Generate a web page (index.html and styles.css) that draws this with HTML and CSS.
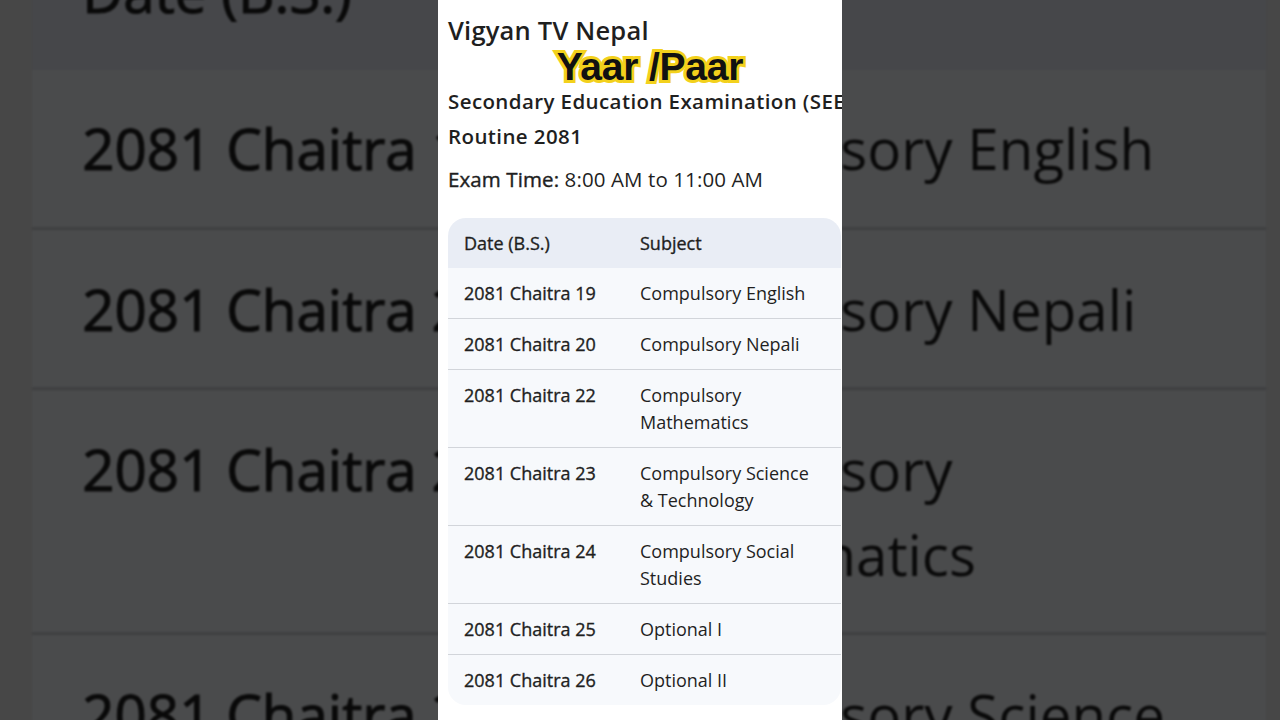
FILE: index.html
```html
<!DOCTYPE html>
<html lang="en">
<head>
<meta charset="utf-8">
<title>SEE Routine 2081</title>
<link rel="stylesheet" href="styles.css">
</head>
<body>
<div class="stage">
  <div class="backdrop" aria-hidden="true">
    <table class="routine routine-big">
      <thead><tr><th>Date (B.S.)</th><th>Subject</th></tr></thead>
      <tbody>
        <tr><td>2081 Chaitra 19</td><td>Compulsory English</td></tr>
        <tr><td>2081 Chaitra 20</td><td>Compulsory Nepali</td></tr>
        <tr><td>2081 Chaitra 22</td><td>Compulsory Mathematics</td></tr>
        <tr><td>2081 Chaitra 23</td><td>Compulsory Science &amp; Technology</td></tr>
        <tr><td>2081 Chaitra 24</td><td>Compulsory Social Studies</td></tr>
        <tr><td>2081 Chaitra 25</td><td>Optional I</td></tr>
        <tr><td>2081 Chaitra 26</td><td>Optional II</td></tr>
      </tbody>
    </table>
  </div>

  <main class="panel">
    <h1 class="channel">Vigyan TV Nepal</h1>
    <div class="brand">Yaar /Paar</div>
    <h2 class="heading"><span>Secondary Education Examination (SEE)</span><span>Routine 2081</span></h2>
    <p class="time"><strong>Exam Time:</strong> 8:00 AM to 11:00 AM</p>
    <table class="routine">
      <thead><tr><th>Date (B.S.)</th><th>Subject</th></tr></thead>
      <tbody>
        <tr><td>2081 Chaitra 19</td><td>Compulsory English</td></tr>
        <tr><td>2081 Chaitra 20</td><td>Compulsory Nepali</td></tr>
        <tr><td>2081 Chaitra 22</td><td>Compulsory Mathematics</td></tr>
        <tr><td>2081 Chaitra 23</td><td>Compulsory Science &amp; Technology</td></tr>
        <tr><td>2081 Chaitra 24</td><td>Compulsory Social Studies</td></tr>
        <tr><td>2081 Chaitra 25</td><td>Optional I</td></tr>
        <tr><td>2081 Chaitra 26</td><td>Optional II</td></tr>
      </tbody>
    </table>
  </main>
</div>
</body>
</html>
```

FILE: styles.css
```css
* { box-sizing: border-box; }

html, body {
  margin: 0;
  padding: 0;
}

body {
  width: 1280px;
  height: 720px;
  overflow: hidden;
  background: #474747;
  font-family: "Open Sans", "Noto Sans", "Liberation Sans", sans-serif;
  color: #1f1f1f;
}

.stage {
  position: relative;
  width: 1280px;
  height: 720px;
  overflow: hidden;
  display: flex;
  justify-content: center;
}

/* enlarged, dimmed copy of the table behind the phone frame */
.backdrop {
  position: absolute;
  inset: 0;
  overflow: hidden;
  background: #474747;
}

.routine-big {
  position: absolute;
  left: 32px;
  top: -111px;
  width: 404px;
  transform: scale(3.14);
  transform-origin: 0 0;
  filter: brightness(0.3) blur(0.4px);
}

.routine-big thead th:first-child,
.routine-big tbody tr:last-child td:first-child { border-radius: 0; }
.routine-big thead th:last-child,
.routine-big tbody tr:last-child td:last-child { border-radius: 0; }

/* phone frame */
.panel {
  position: relative;
  width: 404px;
  height: 720px;
  background: #ffffff;
  overflow: hidden;
  padding: 15px 0 0 10px;
  display: flex;
  flex-direction: column;
}

.channel {
  margin: 0;
  font-size: 25.5px;
  line-height: 30px;
  font-weight: 600;
  letter-spacing: 0.2px;
}

.brand {
  margin: 3px 0 0 0;
  padding-left: 10px;
  text-align: center;
  font-family: "Liberation Sans", Arial, sans-serif;
  font-size: 39px;
  line-height: 38px;
  font-weight: 700;
  letter-spacing: -0.2px;
  color: #111111;
  -webkit-text-stroke: 6px #f3d11c;
  paint-order: stroke fill;
}

.heading {
  margin: -2px 0 0 0;
  display: flex;
  flex-direction: column;
  font-size: 20.5px;
  line-height: 35px;
  font-weight: 600;
  letter-spacing: 0.4px;
  white-space: nowrap;
}

.time {
  margin: 10px 0 0 0;
  font-size: 20.5px;
  line-height: 30px;
  font-weight: 400;
  letter-spacing: 0.1px;
}

.time strong {
  font-weight: 400;
  -webkit-text-stroke: 0.4px currentColor;
}

.routine {
  margin-top: 24px;
  width: 393px;
  border-collapse: separate;
  border-spacing: 0;
  table-layout: fixed;
  font-size: 18px;
  line-height: 27px;
  color: #1f1f1f;
}

.routine th,
.routine td {
  text-align: left;
  vertical-align: top;
  padding: 12px 16px 11px 16px;
}

.routine th:first-child,
.routine td:first-child { width: 176px; }

.routine thead th {
  background: #e9edf5;
  font-weight: 400;
  -webkit-text-stroke: 0.35px currentColor;
}

.routine thead th:first-child { border-top-left-radius: 18px; }
.routine thead th:last-child { border-top-right-radius: 18px; }

.routine tbody td {
  background: #f7f9fc;
  font-weight: 400;
}

.routine tbody td:first-child { -webkit-text-stroke: 0.35px currentColor; }

.routine tbody tr + tr td { border-top: 1px solid #d2d5da; }

.routine tbody tr:last-child td:first-child { border-bottom-left-radius: 18px; }
.routine tbody tr:last-child td:last-child { border-bottom-right-radius: 18px; }
```
